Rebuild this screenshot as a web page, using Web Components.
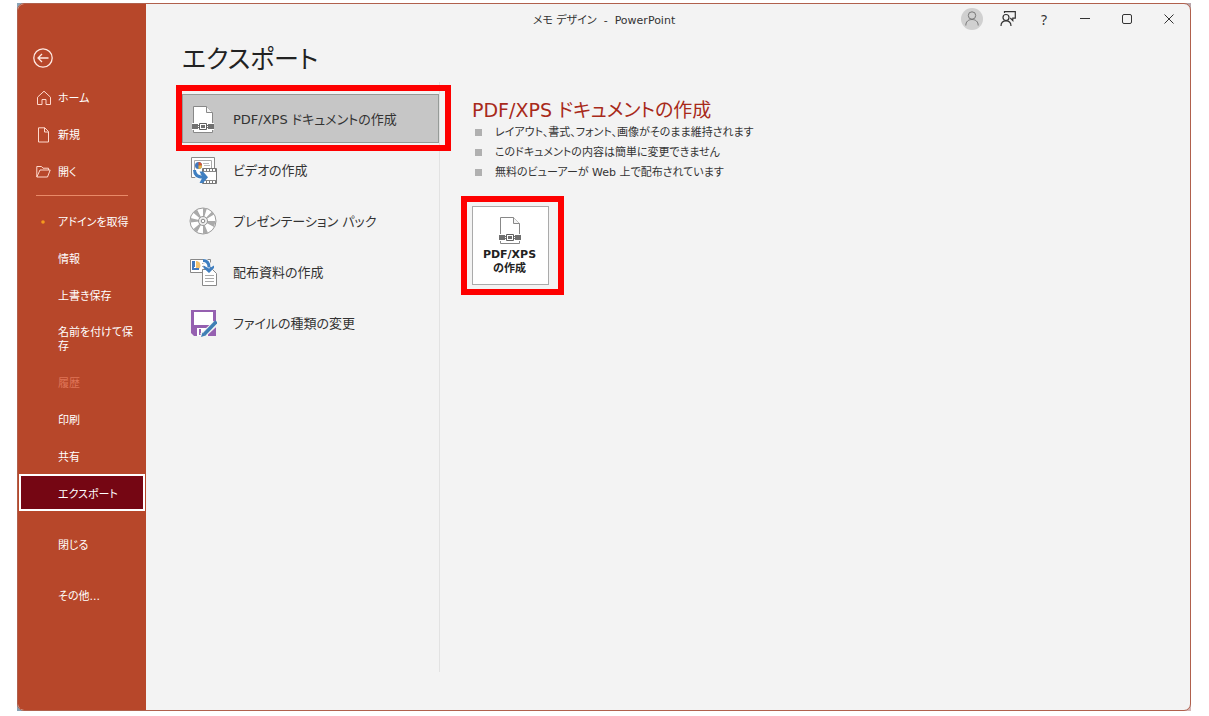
<!DOCTYPE html>
<html lang="ja">
<head>
<meta charset="utf-8">
<title>メモ デザイン - PowerPoint</title>
<style>
html, body { height: 100%; margin: 0; background: #fff; }
body { font-family: "DejaVu Sans", "Noto Sans CJK JP", sans-serif; font-feature-settings: "palt"; color: #333; }
</style>
</head>
<body>
<app-window>
  <window-bar slot="bar">メモ デザイン&nbsp; -&nbsp; PowerPoint</window-bar>
  <side-nav slot="nav">
    <nav-item icon="home">ホーム</nav-item>
    <nav-item icon="new">新規</nav-item>
    <nav-item icon="open">開く</nav-item>
    <nav-rule></nav-rule>
    <nav-item icon="dot">アドインを取得</nav-item>
    <nav-item>情報</nav-item>
    <nav-item>上書き保存</nav-item>
    <nav-item>名前を付けて保存</nav-item>
    <nav-item disabled>履歴</nav-item>
    <nav-item>印刷</nav-item>
    <nav-item>共有</nav-item>
    <nav-item current>エクスポート</nav-item>
    <nav-item apart>閉じる</nav-item>
    <nav-item apart>その他...</nav-item>
  </side-nav>
  <export-page heading="エクスポート">
    <export-option slot="options" icon="pdf" selected>PDF/XPS ドキュメントの作成</export-option>
    <export-option slot="options" icon="video">ビデオの作成</export-option>
    <export-option slot="options" icon="disc">プレゼンテーション パック</export-option>
    <export-option slot="options" icon="handout">配布資料の作成</export-option>
    <export-option slot="options" icon="save">ファイルの種類の変更</export-option>
    <export-detail slot="detail" heading="PDF/XPS ドキュメントの作成">
      <detail-point>レイアウト、書式、フォント、画像がそのまま維持されます</detail-point>
      <detail-point>このドキュメントの内容は簡単に変更できません</detail-point>
      <detail-point>無料のビューアーが Web 上で配布されています</detail-point>
      <tile-button slot="action" icon="pdf">PDF/XPS<br>の作成</tile-button>
    </export-detail>
  </export-page>
</app-window>

<script>
const ICONS = {
  home: '<svg width="16" height="16" viewBox="0 0 16 16" fill="none" stroke="#ffd9cd"><path d="M1.500 7.200 8 1.200l6.500 6v7.300h-4.500V9.500H6v5H1.500z"/></svg>',
  new: '<svg width="16" height="16" viewBox="0 0 16 16" fill="none" stroke="#ffd9cd"><path d="M2.500 .8h6.300L12.500 4.600V15h-10zM8.500 .8V5h4"/></svg>',
  open: '<svg width="16" height="16" viewBox="0 0 16 16" fill="none" stroke="#ffd9cd"><path d="M.8 13V2.500h4.700l1.500 1.700h5.500V6M.8 13 4 6h10.200L11.500 13z"/></svg>',
  dot: '<svg width="16" height="16" viewBox="0 0 16 16"><circle cx="7" cy="8" r="1.800" fill="#f59a1e"/></svg>',
  pdf: '<svg width="28" height="28" viewBox="0 0 28 28" fill="none"><path fill="#fff" stroke="#888" d="M4.500 1.500h13l6 6v20h-19z"/><path fill="#f4f4f4" stroke="#888" d="M17.500 1.500v6h6"/><path fill="#fff" d="M3 18h22v7H3z"/><path fill="#707070" d="M3 19h6v5H3zM19 19h6v5h-6zM9 20h10v1H9zM9 22h10v1H9z"/><path fill="#fff" stroke="#606060" d="M10.500 18.500h7v6h-7z"/><path fill="#707070" d="M12 20h4v3h-4z"/></svg>',
  video: '<svg width="28" height="28" viewBox="0 0 28 28" fill="none"><path fill="#fff" stroke="#8a8a8a" d="M2.500 1.500h23v20h-23z"/><path fill="#fff" stroke="#aaa" d="M5.500 4.500h17v14h-17z"/><path stroke="#bbb" d="M14 7.500h6M15 9.500h6"/><circle cx="9.500" cy="9.500" r="3.500" fill="#4178be"/><path fill="#d9552f" d="M9.500 9.500V6a3.500 3.500 0 0 1 3.500 3.500z"/><path fill="#efb43a" d="M9.500 9.500H13a3.500 3.500 0 0 1-3.500 3.500z"/><path fill="#fff" stroke="#777" d="M13.500 12.500h14v15h-14z"/><path stroke="#777" stroke-dasharray="1 2" stroke-width="2" d="M14 14h13M14 26h13"/><path stroke="#888" d="M14 15.500h13M14 24.500h13"/><path stroke="#fff" stroke-width="5" d="M5.500 14c0 5 3 7.500 10 7.500"/><path stroke="#3f7fc1" stroke-width="3" d="M5.500 14c0 5 3 7.200 9 7.200"/><path fill="#3f7fc1" d="M10.500 15.500H14l5 5.700-5 5.800h-3.500l3-5.800z"/></svg>',
  disc: '<svg width="28" height="28" viewBox="0 0 28 28" fill="none"><circle cx="14" cy="14" r="13" fill="#fff" stroke="#999"/><path fill="#aaa" d="M14 14 4 5.500 8 2.500zM14 14 14 1h4zM14 14 23 4.500l2 3zM14 14 26.500 14 25 20zM14 14 19 26l-5 1zM14 14 8 25.500 4.500 22zM14 14 1.500 15.500 1.500 11z"/><circle cx="14" cy="14" r="4.500" fill="#eee" stroke="#999"/><circle cx="14" cy="14" r="1.800" fill="#fff" stroke="#888"/></svg>',
  handout: '<svg width="28" height="28" viewBox="0 0 28 28" fill="none"><path fill="#fff" stroke="#888" d="M1.500 1.500h20v13h-20z"/><path fill="#4178be" d="M3 3h3v6H3z"/><path fill="#f3c16d" d="M7 3a4.500 4.500 0 0 1 0 9z"/><path stroke="#4178be" stroke-width="2" d="M4 3v8h6"/><path stroke="#aaa" d="M13 5.500h3M13 8.500h3M13 11.500h3"/><path fill="#fff" stroke="#888" d="M13.500 11.500h10l4 4v12h-14z"/><path stroke="#aaa" d="M16 17.500h9M16 20.500h9M16 23.500h9"/><path stroke="#fff" stroke-width="5" d="M14 3c4 0 6 2 6 6"/><path stroke="#3f7fc1" stroke-width="3" d="M14 2.500c4 0 6 2 6 7"/><path fill="#3f7fc1" d="M14.500 7.500v2.500l5.500 5 5-5V7.500l-5 3z"/></svg>',
  save: '<svg width="28" height="28" viewBox="0 0 28 28" fill="none"><path fill="#9560b0" d="M2 1h25v26H5l-3-3z"/><path fill="#fff" d="M5 3h19v13H5zM8 19h11v8H8z"/><path fill="#9560b0" d="M10 20h2v6h-2z"/><path stroke="#f3f3f3" stroke-width="6" d="m13 27 14-13"/><path stroke="#3f7fb5" stroke-width="3.500" d="m15 25.500 12.500-13"/><path fill="#3f7fb5" d="m12 28 1.500-4.500 3 3z"/></svg>'
};

const define = (name, template, setup) => customElements.define(name, class extends HTMLElement {
  constructor() {
    super();
    this.attachShadow({ mode: 'open' }).innerHTML = '<style>*{box-sizing:border-box}button,a{font:inherit;color:inherit;font-feature-settings:inherit}svg{display:block;flex:none}</style>' + template;
  }
  connectedCallback() { if (setup) setup(this, this.shadowRoot); }
});

/* Red frame that highlights whatever it is laid over */
define('mark-frame', `<style>
:host { position: absolute; display: block; box-sizing: border-box; border: 6px solid #fe0000; pointer-events: none; }
</style>`);

define('app-window', `<style>
:host { display: block; box-sizing: border-box; min-height: 100vh; padding: 3px 18px 5px 17px; }
.desk { display: grid; min-height: calc(100vh - 8px); background: linear-gradient(100deg, #8aa5b8, #7c8794 70%, #d5b5b5); }
.win { display: grid; grid-template: 32px 1fr / 128px 1fr; border: 1px solid #b0604c; border-radius: 7px; overflow: hidden; background: #f3f3f3; }
slot[name=nav] { display: block; grid-area: 1 / 1 / 3 / 2; }
slot[name=bar] { display: block; grid-area: 1 / 1 / 2 / 3; }
.main { grid-area: 2 / 2; display: grid; }
</style>
<div class="desk"><div class="win">
<slot name="nav"></slot><slot name="bar"></slot><main class="main"><slot></slot></main>
</div></div>`);

define('window-bar', `<style>
:host { display: grid; grid-template-columns: 1fr auto 1fr; align-items: center; height: 30px; font-size: 11px; color: #333; z-index: 1; position: relative; }
.title { grid-column: 2; white-space: nowrap; }
.tools { display: flex; justify-content: flex-end; align-items: center; }
button { border: 0; background: none; padding: 0; display: grid; place-items: center; width: 42px; height: 30px; }
.small { width: 36px; }
.help { font-family: "Noto Sans", sans-serif; font-size: 14px; margin-right: 2px; }
</style>
<div class="title"><slot></slot></div>
<div class="tools">
<button class="small" aria-label="アカウント"><svg width="22" height="22" viewBox="0 0 22 22" fill="none" stroke="#777"><circle cx="11" cy="11" r="11" fill="#d0d0d0" stroke="none"/><circle cx="11" cy="7.500" r="3.700"/><path d="M4.800 17.500c0-4 2.700-6 6.200-6s6.200 2 6.200 6"/></svg></button>
<button class="small" aria-label="フィードバック"><svg width="18" height="18" viewBox="0 0 18 18" fill="none" stroke="#333" stroke-width="1.200"><circle cx="7" cy="7.500" r="3"/><path d="M2 16c0-3.500 2-5.200 5-5.200s5 1.700 5 5.200M5.500 3V1.600h10.800v6.500h-2.500v2.500L11.300 8"/></svg></button>
<button class="small help" aria-label="ヘルプ">?</button>
<button aria-label="最小化"><svg width="10" height="10" viewBox="0 0 10 10" stroke="#333"><path d="M0 4.500h10"/></svg></button>
<button aria-label="最大化"><svg width="10" height="10" viewBox="0 0 10 10" fill="none" stroke="#333"><rect x=".5" y=".5" width="9" height="9" rx="1.500"/></svg></button>
<button aria-label="閉じる"><svg width="10" height="10" viewBox="0 0 10 10" stroke="#333"><path d="m.5.5 9 9m0-9-9 9"/></svg></button>
</div>`);

define('side-nav', `<style>
:host { display: block; box-sizing: border-box; height: 100%; padding-top: 44px; background: #b7472a; font-size: 11px; line-height: 14px; color: #fff; }
.back { display: block; border: 0; background: none; padding: 0; margin: 0 0 10px 15px; }
nav { display: flex; flex-direction: column; }
</style>
<button class="back" aria-label="戻る"><svg width="20" height="20" viewBox="0 0 20 20" fill="none" stroke="#ffe9e2" stroke-width="1.300"><circle cx="10" cy="10" r="9.200"/><path d="M15.500 10H5m4-4-4 4 4 4"/></svg></button>
<nav><slot></slot></nav>`);

define('nav-rule', `<style>
:host { display: block; height: 1px; margin: 6px 18px; background: #e98a68; }
</style>`);

define('nav-item', `<style>
:host { display: block; }
:host([apart]) { margin-top: 14px; }
a { display: grid; grid-template-columns: 16px 1fr; column-gap: 6px; align-items: center; min-height: 37px; padding: 9px 10px 9px 18px; text-decoration: none; }
.icon { display: grid; align-items: center; height: 14px; }
.label { padding-top: 4px; }
:host([current]) a { margin: 0 1px; padding: 7px 7px 7px 15px; border: 2px solid #fff; background: #750613; }
:host([disabled]) a { color: #df7457; }
</style>
<a href="#"><span class="icon"></span><span class="label"><slot></slot></span></a>`, (el, root) => {
  root.querySelector('.icon').innerHTML = ICONS[el.getAttribute('icon')] || '';
  if (el.hasAttribute('current')) root.querySelector('a').setAttribute('aria-current', 'page');
});

define('export-page', `<style>
:host { display: grid; grid-template-rows: auto 1fr; padding: 0 36px 38px; }
h1 { margin: 0; padding-top: 2px; font-size: 25px; font-weight: 400; line-height: 44px; color: #222; }
.cols { display: grid; grid-template-columns: 258px 1fr; }
.options { display: flex; flex-direction: column; gap: 2px; padding-top: 12px; border-right: 1px solid #e2e2e2; }
.detail { padding: 16px 0 0 32px; }
</style>
<h1></h1>
<div class="cols"><div class="options"><slot name="options"></slot></div><div class="detail"><slot name="detail"></slot></div></div>`, (el, root) => {
  root.querySelector('h1').textContent = el.getAttribute('heading');
});

define('export-option', `<style>
:host { display: block; position: relative; font-size: 13px; }
button { display: flex; align-items: center; gap: 16px; width: 100%; height: 49px; padding: 0 6px; border: 1px solid transparent; background: none; text-align: left; white-space: nowrap; }
:host([selected]) button { background: #c6c6c6; border-color: #969b98; }
mark-frame { inset: -9px -12px -8px -6px; }
:host(:not([selected])) mark-frame { display: none; }
</style>
<button><span class="icon"></span><span><slot></slot></span></button><mark-frame></mark-frame>`, (el, root) => {
  root.querySelector('.icon').innerHTML = ICONS[el.getAttribute('icon')];
});

define('export-detail', `<style>
:host { display: block; }
h2 { margin: 0; font-size: 19px; font-weight: 400; line-height: 24px; color: #a82a1a; white-space: nowrap; }
.points { margin-bottom: 24px; }
</style>
<h2></h2><div class="points" role="list"><slot></slot></div><slot name="action"></slot>`, (el, root) => {
  root.querySelector('h2').textContent = el.getAttribute('heading');
});

define('detail-point', `<style>
:host { display: flex; align-items: center; gap: 13px; height: 20px; padding-left: 3px; font-size: 11px; line-height: 18px; white-space: nowrap; }
i { width: 7px; height: 7px; background: #b0b0b0; }
span { padding-top: 2px; }
</style><i></i><span><slot></slot></span>`, el => el.setAttribute('role', 'listitem'));

define('tile-button', `<style>
:host { display: inline-block; position: relative; font-size: 11px; line-height: 14px; font-weight: 700; color: #222; }
button { display: flex; flex-direction: column; align-items: center; gap: 4px; width: 77px; height: 79px; padding: 9px 2px 0 0; border: 1px solid #aaa; background: #fff; }
mark-frame { inset: -10px -15px -10px -11px; }
</style>
<button><span class="icon"></span><span><slot></slot></span></button><mark-frame></mark-frame>`, (el, root) => {
  root.querySelector('.icon').innerHTML = ICONS[el.getAttribute('icon')];
});
</script>
</body>
</html>
